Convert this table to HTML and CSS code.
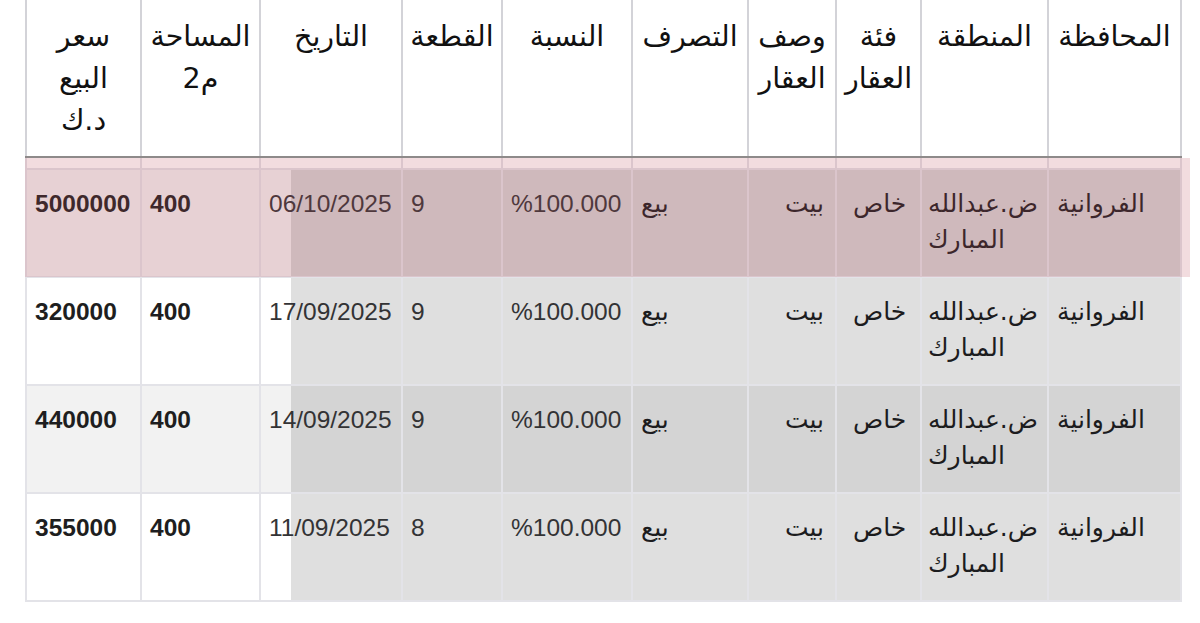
FILE: index.html
```html
<!DOCTYPE html>
<html lang="ar" dir="rtl">
<head>
<meta charset="utf-8">
<title>عقارات</title>
<link rel="stylesheet" href="styles.css">
</head>
<body>
<div class="wrap">
  <table class="deals">
    <colgroup>
      <col class="w-gov"><col class="w-region"><col class="w-cat"><col class="w-desc"><col class="w-act">
      <col class="w-ratio"><col class="w-plot"><col class="w-date"><col class="w-area"><col class="w-price">
    </colgroup>
    <thead>
      <tr>
        <th>المحافظة</th>
        <th>المنطقة</th>
        <th>فئة<br>العقار</th>
        <th>وصف<br>العقار</th>
        <th>التصرف</th>
        <th>النسبة</th>
        <th>القطعة</th>
        <th>التاريخ</th>
        <th>المساحة<br>م2</th>
        <th>سعر<br>البيع<br>د.ك</th>
      </tr>
    </thead>
    <tbody>
      <tr class="gap"><td></td><td></td><td></td><td></td><td></td><td></td><td></td><td></td><td></td><td></td></tr>
      <tr class="row alt">
        <td class="tint">الفروانية</td>
        <td class="tint region">ض.عبدالله المبارك</td>
        <td class="tint cat">خاص</td>
        <td class="tint desc">بيت</td>
        <td class="tint">بيع</td>
        <td class="tint num">%100.000</td>
        <td class="tint num">9</td>
        <td class="date num">06/10/2025</td>
        <td class="bold">400</td>
        <td class="bold">5000000</td>
      </tr>
      <tr class="row">
        <td class="tint">الفروانية</td>
        <td class="tint region">ض.عبدالله المبارك</td>
        <td class="tint cat">خاص</td>
        <td class="tint desc">بيت</td>
        <td class="tint">بيع</td>
        <td class="tint num">%100.000</td>
        <td class="tint num">9</td>
        <td class="date num">17/09/2025</td>
        <td class="bold">400</td>
        <td class="bold">320000</td>
      </tr>
      <tr class="row alt">
        <td class="tint">الفروانية</td>
        <td class="tint region">ض.عبدالله المبارك</td>
        <td class="tint cat">خاص</td>
        <td class="tint desc">بيت</td>
        <td class="tint">بيع</td>
        <td class="tint num">%100.000</td>
        <td class="tint num">9</td>
        <td class="date num">14/09/2025</td>
        <td class="bold">400</td>
        <td class="bold">440000</td>
      </tr>
      <tr class="row">
        <td class="tint">الفروانية</td>
        <td class="tint region">ض.عبدالله المبارك</td>
        <td class="tint cat">خاص</td>
        <td class="tint desc">بيت</td>
        <td class="tint">بيع</td>
        <td class="tint num">%100.000</td>
        <td class="tint num">8</td>
        <td class="date num">11/09/2025</td>
        <td class="bold">400</td>
        <td class="bold">355000</td>
      </tr>
    </tbody>
  </table>
  <div class="highlight"></div>
</div>
</body>
</html>
```
FILE: styles.css
```css
html, body {
  margin: 0;
  padding: 0;
  background: #ffffff;
}

body {
  font-family: "Liberation Sans", "DejaVu Sans", sans-serif;
  color: #1c1c1e;
}

.wrap {
  position: relative;
  width: 1200px;
  height: 623px;
  overflow: hidden;
}

.deals {
  direction: rtl;
  margin-right: 18px;
  margin-left: 27px;
  margin-top: -2px;
  width: 1155px;
  table-layout: fixed;
  border-collapse: collapse;
}

.w-gov { width: 133px; }
.w-region { width: 127px; }
.w-cat { width: 85px; }
.w-desc { width: 88px; }
.w-act { width: 116px; }
.w-ratio { width: 130px; }
.w-plot { width: 100px; }
.w-date { width: 142px; }
.w-area { width: 119px; }
.w-price { width: 115px; }

.deals th {
  background: #ffffff;
  font-family: "DejaVu Sans", "Liberation Sans", sans-serif;
  font-weight: normal;
  font-size: 28.5px;
  line-height: 42px;
  color: #111111;
  text-align: center;
  vertical-align: top;
  padding: 18px 4px 14px;
  border-left: 2px solid #d3d3d8;
  border-right: 2px solid #d3d3d8;
  border-bottom: 2px solid #8e8a8a;
}

.deals td {
  border: 2px solid #e3e3e8;
  text-align: left;
  vertical-align: top;
  padding: 16px 8px 18px;
  font-family: "DejaVu Sans", "Liberation Sans", sans-serif;
  font-size: 25px;
  line-height: 36px;
  color: #1c1c1e;
  background: var(--base);
}

.gap td {
  height: 10px;
  padding: 0;
  border-top: none;
  background: #ffffff;
}

.row {
  --base: #ffffff;
  --tint: #dfdfdf;
}

.row.alt {
  --base: #f2f2f2;
  --tint: #d4d4d4;
}

.deals td.tint {
  background: var(--tint);
}

.deals td.date {
  background: linear-gradient(to right, var(--base) 0, var(--base) 31px, var(--tint) 31px);
  background-origin: border-box;
}

.deals td.num {
  font-family: "Liberation Sans", sans-serif;
  font-size: 24.5px;
  color: #333335;
}

.deals td.bold {
  font-family: "Liberation Sans", sans-serif;
  font-size: 24.5px;
  font-weight: bold;
  color: #1e1e20;
}

.deals td.region {
  padding-left: 6px;
  padding-right: 4px;
}

.deals td.cat {
  padding-left: 16px;
}

.deals td.desc {
  padding-left: 36px;
}

.highlight {
  position: absolute;
  left: 25px;
  top: 158px;
  width: 1165px;
  height: 119px;
  background: rgba(190, 80, 95, 0.2);
  pointer-events: none;
}
```
